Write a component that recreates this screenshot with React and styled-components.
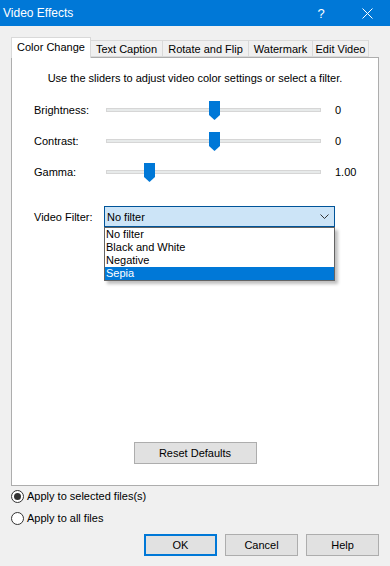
import React, { useState } from "react";
import styled, { createGlobalStyle } from "styled-components";

const GlobalStyle = createGlobalStyle`
  html, body {
    margin: 0;
    padding: 0;
    background: #f0f0f0;
  }
  body {
    font-family: "Liberation Sans", Arial, sans-serif;
    font-size: 11px;
    color: #000;
  }
`;

const Window = styled.div`
  width: 390px;
  height: 566px;
  display: flex;
  flex-direction: column;
  background: #f0f0f0;
  overflow: hidden;
`;

const TitleBar = styled.div`
  height: 26px;
  background: #0078d7;
  color: #fff;
  display: flex;
  align-items: center;
  padding-left: 3px;
`;

const Title = styled.div`
  flex: 1;
  font-size: 12px;
`;

const TitleButton = styled.div`
  width: ${p => p.w}px;
  height: 26px;
  display: flex;
  align-items: center;
  justify-content: center;
  font-size: 13px;
`;

const Body = styled.div`
  padding: 11px 11px 0 11px;
  display: flex;
  flex-direction: column;
`;

const TabRow = styled.div`
  display: flex;
  align-items: flex-end;
  height: 20px;
  position: relative;
  z-index: 1;
`;

const Tab = styled.div`
  width: ${p => p.w}px;
  box-sizing: border-box;
  height: ${p => (p.active ? 21 : 17)}px;
  margin-bottom: ${p => (p.active ? -1 : 0)}px;
  border: 1px solid #d9d9d9;
  border-bottom: ${p => (p.active ? "none" : "1px solid #d9d9d9")};
  border-left: ${p => (p.first || p.active ? "1px solid #d9d9d9" : "none")};
  background: ${p => (p.active ? "#fff" : "#f0f0f0")};
  display: flex;
  align-items: ${p => (p.active ? "flex-start" : "center")};
  padding-top: ${p => (p.active ? 3 : 0)}px;
  justify-content: center;
  white-space: nowrap;
  font-size: 11px;
`;

const Panel = styled.div`
  box-sizing: border-box;
  height: 429px;
  border: 1px solid #adadad;
  background: #fff;
  display: flex;
  flex-direction: column;
  align-items: stretch;
  padding: 0 0 0 22px;
`;

const Intro = styled.div`
  text-align: center;
  margin: 14px 0 10px -22px;
`;

const SliderRow = styled.div`
  display: flex;
  align-items: center;
  height: 31px;
`;

const Label = styled.div`
  width: 72px;
  white-space: nowrap;
`;

const Track = styled.div`
  position: relative;
  width: 215px;
  height: 4px;
  box-sizing: border-box;
  background: #e7eaea;
  border: 1px solid #d6d6d6;
`;

const Thumb = styled.svg`
  position: absolute;
  top: -8px;
  margin-left: -5px;
`;

const Value = styled.div`
  margin-left: 14px;
`;

const FilterRow = styled.div`
  display: flex;
  align-items: center;
  margin-top: 19px;
  position: relative;
`;

const FilterLabel = styled.div`
  width: 70px;
`;

const Combo = styled.div`
  position: relative;
  box-sizing: border-box;
  width: 231px;
  height: 21px;
  background: #cce4f7;
  border: 1px solid #005499;
  display: flex;
  align-items: center;
  padding-left: 2px;
`;

const ComboText = styled.div`
  flex: 1;
`;

const Chevron = styled.svg`
  margin-right: 5px;
`;

const ListBox = styled.div`
  position: absolute;
  top: 20px;
  left: -1px;
  box-sizing: border-box;
  width: 231px;
  background: #fff;
  border: 1px solid #646464;
  box-shadow: 3px 3px 3px rgba(0, 0, 0, 0.25);
  z-index: 2;
`;

const ListItem = styled.div`
  height: 13px;
  line-height: 13px;
  padding-left: 1px;
  background: ${p => (p.selected ? "#0078d7" : "#fff")};
  color: ${p => (p.selected ? "#fff" : "#000")};
`;

const PanelFooter = styled.div`
  margin-top: auto;
  margin-bottom: 21px;
  display: flex;
  justify-content: center;
  margin-left: -22px;
`;

const Button = styled.button`
  box-sizing: border-box;
  width: ${p => p.w}px;
  height: 22px;
  background: #e1e1e1;
  border: ${p => (p.primary ? "2px solid #0078d7" : "1px solid #adadad")};
  font-family: inherit;
  font-size: 11px;
  color: #000;
  padding: 0;
  outline: none;
`;

const RadioRow = styled.label`
  display: flex;
  align-items: center;
  height: 14px;
  margin-top: ${p => p.gap}px;
  gap: 3px;
`;

const RadioCircle = styled.span`
  width: 13px;
  height: 13px;
  box-sizing: border-box;
  border-radius: 50%;
  border: 1px solid #333;
  background: #fff;
  display: flex;
  align-items: center;
  justify-content: center;

  &::after {
    content: "";
    width: 7px;
    height: 7px;
    border-radius: 50%;
    background: ${p => (p.checked ? "#333" : "transparent")};
  }
`;

const ButtonBar = styled.div`
  display: flex;
  justify-content: flex-end;
  gap: 8px;
  margin-top: 9px;
`;

const tabs = [
  { name: "Color Change", w: 80 },
  { name: "Text Caption", w: 72 },
  { name: "Rotate and Flip", w: 86 },
  { name: "Watermark", w: 64 },
  { name: "Edit Video", w: 56 },
];

const sliders = [
  { label: "Brightness:", value: "0", pos: 0.5 },
  { label: "Contrast:", value: "0", pos: 0.5 },
  { label: "Gamma:", value: "1.00", pos: 0.195 },
];

const filters = ["No filter", "Black and White", "Negative", "Sepia"];

const App = () => {
  const [applyAll, setApplyAll] = useState(false);

  return (
    <Window>
      <GlobalStyle />
      <TitleBar>
        <Title>Video Effects</Title>
        <TitleButton w={46}>?</TitleButton>
        <TitleButton w={46}>
          <svg width="11" height="11" viewBox="0 0 11 11">
            <path d="M0.5 0.5 L10.5 10.5 M10.5 0.5 L0.5 10.5" stroke="#fff" strokeWidth="1" />
          </svg>
        </TitleButton>
      </TitleBar>
      <Body>
        <TabRow>
          { tabs.map((tab, i) => (
            <Tab key={ tab.name } w={ tab.w } active={ i === 0 } first={ i === 0 }>{ tab.name }</Tab>
          )) }
        </TabRow>
        <Panel>
          <Intro>Use the sliders to adjust video color settings or select a filter.</Intro>
          { sliders.map((s) => (
            <SliderRow key={ s.label }>
              <Label>{ s.label }</Label>
              <Track>
                <Thumb width="11" height="19" viewBox="0 0 11 19" style={ { left: `${s.pos * 100}%` } }>
                  <polygon points="0,0 11,0 11,14 5.5,19 0,14" fill="#0078d7" />
                </Thumb>
              </Track>
              <Value>{ s.value }</Value>
            </SliderRow>
          )) }
          <FilterRow>
            <FilterLabel>Video Filter:</FilterLabel>
            <Combo>
              <ComboText>No filter</ComboText>
              <Chevron width="9" height="5" viewBox="0 0 9 5">
                <path d="M0.5 0.5 L4.5 4.5 L8.5 0.5" stroke="#333" strokeWidth="1" fill="none" />
              </Chevron>
              <ListBox>
                { filters.map((f) => (
                  <ListItem key={ f } selected={ f === "Sepia" }>{ f }</ListItem>
                )) }
              </ListBox>
            </Combo>
          </FilterRow>
          <PanelFooter>
            <Button w={ 123 }>Reset Defaults</Button>
          </PanelFooter>
        </Panel>
        <RadioRow gap={ 3 } onClick={ () => setApplyAll(false) }>
          <RadioCircle checked={ !applyAll } />
          Apply to selected files(s)
        </RadioRow>
        <RadioRow gap={ 8 } onClick={ () => setApplyAll(true) }>
          <RadioCircle checked={ applyAll } />
          Apply to all files
        </RadioRow>
        <ButtonBar>
          <Button w={ 73 } primary>OK</Button>
          <Button w={ 73 }>Cancel</Button>
          <Button w={ 73 }>Help</Button>
        </ButtonBar>
      </Body>
    </Window>
  );
};

export default App;
